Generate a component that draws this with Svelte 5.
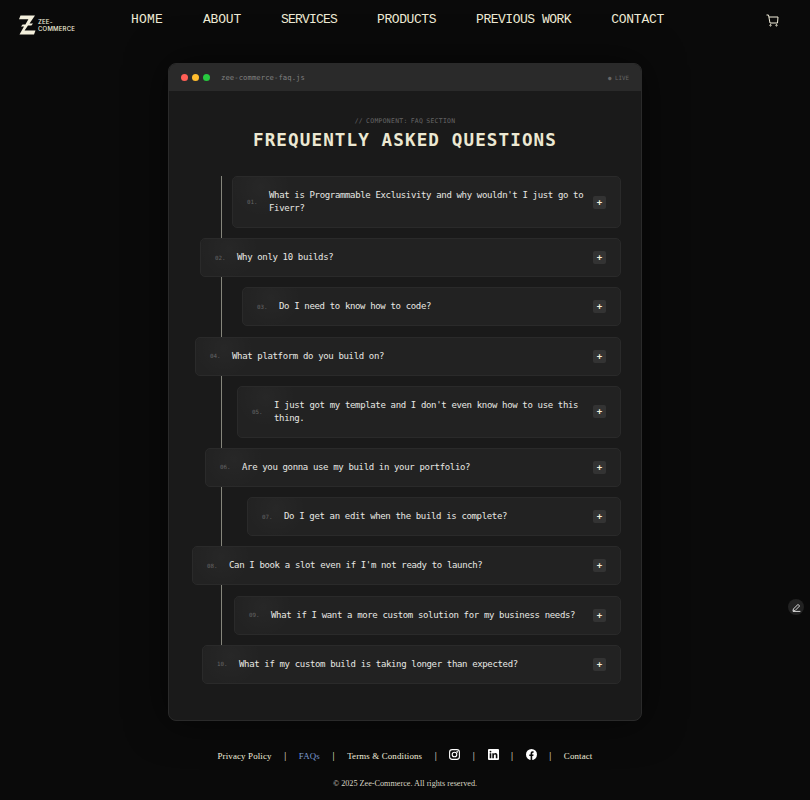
<script>
  const nav = [
    { label: 'HOME', w: 32 },
    { label: 'ABOUT', w: 38 },
    { label: 'SERVICES', w: 56 },
    { label: 'PRODUCTS', w: 59 },
    { label: 'PREVIOUS WORK', w: 95 },
    { label: 'CONTACT', w: 53 }
  ];
  const faqs = [
    { q: "What is Programmable Exclusivity and why wouldn't I just go to Fiverr?", left: 63 },
    { q: 'Why only 10 builds?', left: 31 },
    { q: 'Do I need to know how to code?', left: 73 },
    { q: 'What platform do you build on?', left: 26 },
    { q: "I just got my template and I don't even know how to use this thing.", left: 68 },
    { q: 'Are you gonna use my build in your portfolio?', left: 36 },
    { q: 'Do I get an edit when the build is complete?', left: 78 },
    { q: "Can I book a slot even if I'm not ready to launch?", left: 23 },
    { q: 'What if I want a more custom solution for my business needs?', left: 65 },
    { q: 'What if my custom build is taking longer than expected?', left: 33 }
  ];
</script>

<div class="page">
  <header class="top">
    <a class="logo" href="#top">
      <svg width="17" height="20" viewBox="0 0 17 20" aria-hidden="true">
        <path fill="#f3efdc" d="M1.5 0.5H16L10.5 8.6H14L12.4 10.6H9L5.6 15.6H16.5L15 19.5H0.5L5 11.6H2L3.6 9.4H6.4L9.4 4.2H0Z"/>
      </svg>
      <span class="wordmark">ZEE-<br />COMMERCE</span>
    </a>
    <nav class="menu">
      {#each nav as item}
        <a href="#top" style="letter-spacing: {(item.w / item.label.length - 7.8).toFixed(2)}px">{item.label}</a>
      {/each}
    </nav>
    <svg class="cart" width="13" height="13" viewBox="0 0 13 13" fill="none" stroke="#f3efdc" stroke-width="1" aria-hidden="true">
      <path d="M0.5 1H2.5L4 9H11.5L12 3H3"/>
      <circle cx="4.5" cy="11.3" r="0.7"/>
      <circle cx="10.5" cy="11.3" r="0.7"/>
    </svg>
  </header>

  <main class="window">
    <div class="bar">
      <span class="dot red"></span>
      <span class="dot yellow"></span>
      <span class="dot green"></span>
      <span class="file">zee-commerce-faq.js</span>
      <span class="live">● LIVE</span>
    </div>
    <div class="body">
      <p class="comment">// COMPONENT: FAQ SECTION</p>
      <h1>FREQUENTLY ASKED QUESTIONS</h1>
      <div class="list">
        <span class="line"></span>
        {#each faqs as f, i}
          <div class="item" style="margin-left: {f.left}px">
            <span class="num">{String(i + 1).padStart(2, '0')}.</span>
            <span class="q">{f.q}</span>
            <span class="plus">+</span>
          </div>
        {/each}
      </div>
    </div>
  </main>

  <footer class="foot">
    <div class="links">
      <a href="#top">Privacy Policy</a>
      <span class="sep">|</span>
      <a class="active" href="#top">FAQs</a>
      <span class="sep">|</span>
      <a href="#top">Terms &amp; Conditions</a>
      <span class="sep">|</span>
      <svg class="social" width="11" height="11" viewBox="0 0 11 11" fill="none" stroke="#fff" stroke-width="1.1" aria-hidden="true">
        <rect x="0.6" y="0.6" width="9.8" height="9.8" rx="2.6"/>
        <circle cx="5.5" cy="5.5" r="2.3"/>
        <circle cx="8.2" cy="2.8" r="0.35" fill="#fff"/>
      </svg>
      <span class="sep">|</span>
      <svg class="social" width="11" height="11" viewBox="0 0 11 11" aria-hidden="true">
        <rect width="11" height="11" rx="1" fill="#fff"/>
        <path fill="#0a0a0a" d="M1.7 4.2H3.3V9.3H1.7ZM2.5 1.7A0.9 0.9 0 1 1 2.5 3.5A0.9 0.9 0 0 1 2.5 1.7ZM4.3 4.2H5.8V4.9C6.1 4.4 6.7 4.1 7.4 4.1C8.9 4.1 9.4 5 9.4 6.4V9.3H7.8V6.7C7.8 6 7.6 5.5 7 5.5C6.3 5.5 5.9 6 5.9 6.7V9.3H4.3Z"/>
      </svg>
      <span class="sep">|</span>
      <svg class="social" width="11" height="11" viewBox="0 0 11 11" aria-hidden="true">
        <circle cx="5.5" cy="5.5" r="5.5" fill="#fff"/>
        <path fill="#0a0a0a" d="M4.6 11V7H3.3V5.5H4.6V4.3C4.6 3 5.4 2.3 6.5 2.3C7 2.3 7.6 2.4 7.6 2.4V3.7H7C6.4 3.7 6.2 4.1 6.2 4.5V5.5H7.6L7.3 7H6.2V11Z"/>
      </svg>
      <span class="sep">|</span>
      <a href="#top">Contact</a>
    </div>
    <p class="copy">© 2025 Zee-Commerce. All rights reserved.</p>
  </footer>

  <button class="edit" aria-label="Edit">
    <svg width="9" height="9" viewBox="0 0 9 9" fill="none" stroke="#d8d8d8" stroke-width="1" aria-hidden="true">
      <path d="M1 8L1.4 6L6 1.4L7.6 3L3 7.6ZM0.8 8.4H8.4"/>
    </svg>
  </button>
</div>

<style>
  :global(body) {
    margin: 0;
    background: #0a0a0a;
  }

  .page {
    position: relative;
    height: 800px;
    overflow: hidden;
    background: #0a0a0a;
    display: flex;
    flex-direction: column;
    align-items: center;
  }

  a {
    text-decoration: none;
    color: inherit;
  }

  .top {
    width: 100%;
    height: 63px;
    flex: none;
    box-sizing: border-box;
    display: flex;
    align-items: flex-start;
    padding: 0 31px 0 19px;
  }

  .logo {
    display: flex;
    align-items: center;
    gap: 2px;
    margin-top: 15px;
    width: 112px;
    color: #f3efdc;
  }

  .wordmark {
    font: 500 6px/7.2px Inter, sans-serif;
    letter-spacing: 0.2px;
  }

  .menu {
    display: flex;
    gap: 40px;
    margin-top: 11px;
    font: 400 13px/17px "Liberation Mono", monospace;
    color: #efebd6;
    white-space: nowrap;
  }

  .cart {
    margin-left: auto;
    margin-top: 14px;
  }

  .window {
    width: 474px;
    height: 658px;
    flex: none;
    box-sizing: border-box;
    background: #1a1a1a;
    border: 1px solid #2a2a2a;
    border-radius: 8px;
    overflow: hidden;
    box-shadow: 0 0 40px rgba(0, 0, 0, 0.6);
  }

  .bar {
    height: 27px;
    background: #2a2a2a;
    display: flex;
    align-items: center;
    padding: 0 12px;
    gap: 4px;
  }

  .dot {
    width: 7px;
    height: 7px;
    border-radius: 50%;
  }

  .red { background: #ff5f56; }
  .yellow { background: #ffbd2e; }
  .green { background: #27c93f; }

  .file {
    margin-left: 7px;
    font: 400 7.2px/12px "DejaVu Sans Mono", monospace;
    letter-spacing: 0.09px;
    color: #808080;
  }

  .live {
    margin-left: auto;
    font: 400 5.8px/10px "DejaVu Sans Mono", monospace;
    color: #666;
  }

  .body {
    padding: 25px 20px 0 0;
  }

  .comment {
    margin: 0;
    text-align: center;
    padding-left: 20px;
    font: 400 6.4px/10px "DejaVu Sans Mono", monospace;
    color: #666;
    letter-spacing: 0.3px;
    word-spacing: -1px;
  }

  h1 {
    margin: 2px 0 0;
    padding-left: 20px;
    text-align: center;
    font: 700 17.6px/24px "DejaVu Sans Mono", monospace;
    letter-spacing: 1.1px;
    color: #ece8d2;
  }

  .list {
    position: relative;
    margin-top: 24px;
    display: flex;
    flex-direction: column;
    gap: 10.2px;
  }

  .line {
    position: absolute;
    left: 52px;
    top: 0;
    bottom: 39px;
    width: 1px;
    background: #86867c;
  }

  .item {
    position: relative;
    box-sizing: border-box;
    display: flex;
    align-items: center;
    padding: 12px 14px;
    background:
      radial-gradient(circle at 28px 10px, rgba(255, 255, 255, 0.022), transparent 30px),
      #222;
    border: 1px solid #2a2a2a;
    border-radius: 5px;
  }

  .num {
    width: 22px;
    flex: none;
    font: 400 5.8px/10px "DejaVu Sans Mono", monospace;
    color: #666;
  }

  .q {
    flex: 1;
    font: 400 9px/13px "DejaVu Sans Mono", monospace;
    letter-spacing: -0.35px;
    color: #e8e8e4;
    padding-right: 8px;
  }

  .plus {
    width: 13px;
    height: 13px;
    flex: none;
    border-radius: 2px;
    background: #333;
    color: #f3efdc;
    font: 700 9px/13px "DejaVu Sans Mono", monospace;
    text-align: center;
  }

  .foot {
    margin-top: 26px;
    color: #f3efdc;
    font-family: "Liberation Serif", serif;
    text-align: center;
  }

  .links {
    display: flex;
    align-items: center;
    gap: 12.5px;
    font-size: 8.9px;
    line-height: 18px;
    letter-spacing: 0.15px;
  }

  .active { color: #7b9ad0; }

  .sep {
    color: #f3efdc;
    font-size: 10px;
  }

  .social { margin-top: -3px; }

  .copy {
    margin: 12.5px 0 0;
    font-size: 8.2px;
    line-height: 12px;
    color: #d8d5c4;
  }

  .edit {
    position: absolute;
    left: 788px;
    top: 599px;
    width: 16px;
    height: 16px;
    padding: 0;
    border: 0;
    border-radius: 50%;
    background: #222;
    display: flex;
    align-items: center;
    justify-content: center;
  }
</style>
